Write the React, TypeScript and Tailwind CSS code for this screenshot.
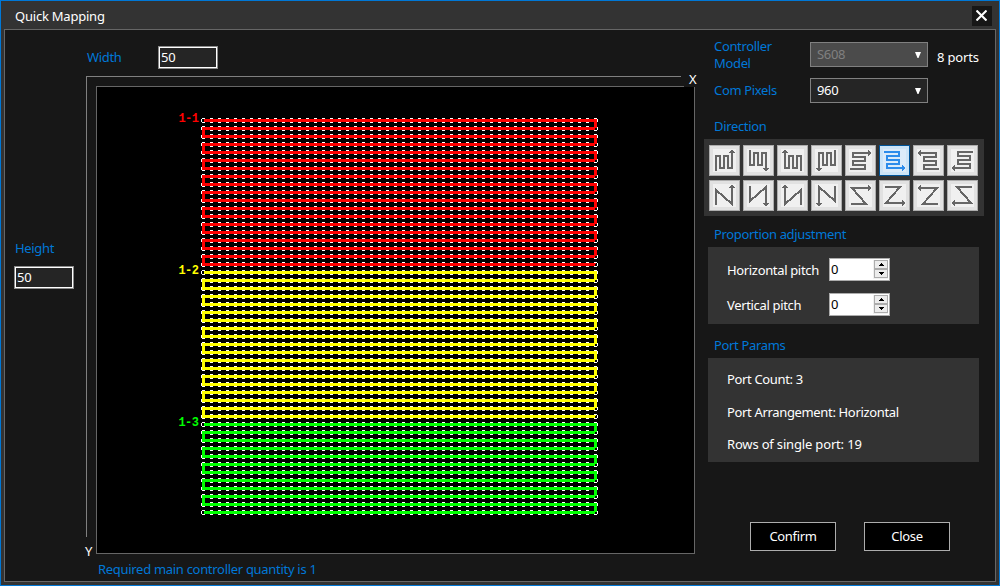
import React, { useState } from "react";
import clsx from "clsx";

const COLS = 50;
const ROWS = 50;
const PITCH = 8;
const ROWS_PER_PORT = 19;

const PORTS = [
  { label: "1-1", color: "#ff0000" },
  { label: "1-2", color: "#ffff00" },
  { label: "1-3", color: "#00ff00" },
];

// snake path for one port, always starting at the left
const buildPortPath = (start: number, count: number) => {
  const left = 2.5;
  const right = 2.5 + (COLS - 1) * PITCH;
  let d = "";
  for (let i = 0; i < count; i++) {
    const y = 2.5 + (start + i) * PITCH;
    const [from, to] = i % 2 === 0 ? [left, right] : [right, left];
    d += `${i === 0 ? "M" : "L"}${from} ${y}L${to} ${y}`;
  }
  return d;
};

const PixelMap: React.FC = () => {
  const right = (COLS - 1) * PITCH;
  return (
    <svg width="420" height="410" viewBox="-23 -10 420 410" shapeRendering="crispEdges" className="block">
      <defs>
        <pattern id="node" width={PITCH} height={PITCH} patternUnits="userSpaceOnUse">
          <path d="M1 0h3v1h-3zM1 4h3v1h-3zM0 1h1v3h-1zM4 1h1v3h-1z" fill="#fff" />
        </pattern>
      </defs>
      <rect width={right + 5} height={(ROWS - 1) * PITCH + 5} fill="url(#node)" />
      {PORTS.map((port, p) => {
        const start = p * ROWS_PER_PORT;
        const count = Math.min(ROWS_PER_PORT, ROWS - start);
        return (
          <g key={port.label}>
            <path d={buildPortPath(start, count)} fill="none" stroke={port.color} strokeWidth="3" />
            {Array.from({ length: count }, (_, i) => i)
              .filter((i) => i % 2 === 1 || i === count - 1)
              .map((i) => (
                <rect key={i} x={right + 2} y={(start + i) * PITCH + 2} width="2" height="2" fill="#000" />
              ))}
            <text
              x="-22.5"
              y={start * PITCH + 4}
              fill={port.color}
              textLength="20"
              className="font-['Liberation_Mono',monospace] text-[12px] font-bold"
            >
              {port.label}
            </text>
          </g>
        );
      })}
    </svg>
  );
};

const SHAPES = {
  columns: { d: "M7 26V11H11V23H15V11H19V23H23V7", head: "M22 5h2v1h1v1h1v1h-6v-1h1v-1h1z" },
  rows: { d: "M5 24H20V20H8V16H20V12H8V8H24", head: "M26 7v2h-1v1h-1v1h-1v-6h1v1h1v1z" },
  n: { d: "M7 25V10L23 24V7", head: "M22 5h2v1h1v1h1v1h-6v-1h1v-1h1z" },
  z: { d: "M6 24H21L7 8H24", head: "M26 7v2h-1v1h-1v1h-1v-6h1v1h1v1z" },
};

const FLIPS = [
  undefined,
  "translate(0 31) scale(1 -1)",
  "translate(31 0) scale(-1 1)",
  "translate(31 31) scale(-1 -1)",
];

const DIRECTIONS = [
  ...FLIPS.map((flip) => ({ ...SHAPES.columns, flip })),
  ...FLIPS.map((flip) => ({ ...SHAPES.rows, flip })),
  ...FLIPS.map((flip) => ({ ...SHAPES.n, flip })),
  ...FLIPS.map((flip) => ({ ...SHAPES.z, flip })),
];

const DirectionPicker: React.FC = () => {
  const [selected, setSelected] = useState(5);

  return (
    <div className="ml-[-1px] grid h-[77px] w-[280px] grid-cols-[repeat(8,31px)] grid-rows-[31px_31px] gap-x-[3px] gap-y-1 bg-[#333] pl-[5px] pt-[6px]">
      {DIRECTIONS.map((dir, i) => (
        <button
          key={i}
          onClick={() => setSelected(i)}
          className={clsx(
            "border",
            selected === i ? "border-[#005499] bg-[#cce4f7] text-[#2d8ceb]" : "border-[#adadad] bg-[#e1e1e1] text-[#666]"
          )}
        >
          <svg width="31" height="31" viewBox="0 0 31 31" shapeRendering="crispEdges" className="-m-px block">
            <rect x="4" y="4" width="23" height="23" fill={selected === i ? "#dcebf9" : "#f0f0f0"} />
            <g transform={dir.flip}>
              <path d={dir.d} fill="none" stroke="currentColor" strokeWidth="2" />
              <path d={dir.head} fill="currentColor" />
            </g>
          </svg>
        </button>
      ))}
    </div>
  );
};

const SizeInput: React.FC<{ value: string; onChange: (v: string) => void }> = ({ value, onChange }) => (
  <div className="h-[23px] w-[60px] border border-[#8a8a8a]">
    <input
      value={value}
      onChange={(e) => onChange(e.target.value)}
      className="block h-full w-full border border-white bg-[#252525] pb-[2px] pl-px text-[13px] leading-[17px] tracking-[-0.3px] text-white outline-none"
    />
  </div>
);

const Select: React.FC<{ value: string; disabled?: boolean }> = ({ value, disabled }) => (
  <button
    disabled={disabled}
    className={clsx(
      "flex h-[25px] w-[118px] items-center justify-between border border-[#808080] pl-[6px] pr-[6px]",
      disabled ? "bg-[#4b4b4b] text-[#808080]" : "bg-[#252525] text-white"
    )}
  >
    <span>{value}</span>
    <svg width="6" height="6" viewBox="0 0 6 6" className="text-white">
      <path d="M0 0h6L3.5 6h-1z" fill="currentColor" />
    </svg>
  </button>
);

const Spinner: React.FC<{ value: number; onChange: (v: number) => void }> = ({ value, onChange }) => (
  <div className="flex h-[23px] w-[61px] justify-between border border-[#acacac] bg-white pr-px pt-px text-black">
    <span className="pl-px leading-[18px]">{value}</span>
    <div className="flex h-[19px] w-[15px] flex-col bg-[#f0f0f0] pl-px">
      {[1, -1].map((step) => (
        <button
          key={step}
          onClick={() => onChange(value + step)}
          className="flex h-[9px] items-center justify-center border border-[#acacac] bg-[#ececec]"
        >
          <svg width="5" height="3" viewBox="0 0 5 3" shapeRendering="crispEdges">
            <path d={step > 0 ? "M2 0h1v1h1v1h1v1h-5v-1h1v-1h1z" : "M0 0h5v1h-1v1h-1v1h-1v-1h-1v-1h-1z"} fill="#000" />
          </svg>
        </button>
      ))}
    </div>
  </div>
);

const Label: React.FC<{ className?: string; children: React.ReactNode }> = ({ className, children }) => (
  <div className={clsx("text-[#0078d7] leading-[17px]", className)}>{children}</div>
);

const App: React.FC = () => {
  const [width, setWidth] = useState("50");
  const [height, setHeight] = useState("50");
  const [hPitch, setHPitch] = useState(0);
  const [vPitch, setVPitch] = useState(0);

  return (
    <div className="flex h-[586px] w-[1000px] flex-col overflow-hidden border border-[#0078d7] bg-[#333] pb-[3px] pl-[3px] pr-[3px] font-['Noto_Sans',sans-serif] text-[13px] tracking-[-0.34px] text-white">
      <header className="flex h-7 shrink-0 items-center justify-between pl-[11px] pr-1">
        <span className="pt-[3px] leading-[17px] tracking-[-0.22px]">Quick Mapping</span>
        <button className="mt-[1px] flex h-5 w-5 items-center justify-center bg-[#171717] pb-px pr-px">
          <svg width="11" height="11" viewBox="0 0 11 11">
            <path d="M0.5 0.5L10.5 10.5M10.5 0.5L0.5 10.5" stroke="#fff" strokeWidth="2.1" />
          </svg>
        </button>
      </header>

      <main className="flex flex-1 border border-[#666] bg-[#171717]">
        <aside className="w-[81px] shrink-0 pl-[9px] pt-[210px]">
          <Label className="mb-[9px] pl-px">Height</Label>
          <SizeInput value={height} onChange={setHeight} />
        </aside>

        <section className="w-[619px] shrink-0">
          <div className="flex h-[46px] pt-4">
            <Label className="w-[72px] pl-px pt-[3px]">Width</Label>
            <SizeInput value={width} onChange={setWidth} />
          </div>
          <div className="relative h-[478px]">
            <div className="h-[461px] w-[595px] border-l border-t border-[#808080] pl-[9px] pt-[9px]">
              <div className="h-[468px] w-[599px] border border-[#666] bg-black pl-[81px] pt-[21px]">
                <PixelMap />
              </div>
            </div>
            <span className="absolute left-[598px] top-[-5px] w-[18px] bg-[#171717] pl-[5px] leading-[16px]">X</span>
            <span className="absolute left-[-3px] top-[467px] h-[17px] w-[13px] bg-[#171717] pl-[2px] leading-[17px]">Y</span>
          </div>
          <Label className="pl-3 pt-[7px] tracking-[-0.3px]">Required main controller quantity is 1</Label>
        </section>

        <section className="flex w-[285px] flex-col">
          <div className="flex h-[48px] pl-[9px] pt-2">
            <Label className="w-[96px] pr-5">Controller Model</Label>
            <div className="pt-1">
              <Select value="S608" disabled />
            </div>
            <span className="pl-[9px] pt-[11px] leading-[17px] tracking-[-0.15px]">8 ports</span>
          </div>
          <div className="flex h-[40px] pl-[9px]">
            <Label className="w-[96px] pt-[4px]">Com Pixels</Label>
            <Select value="960" />
          </div>
          <Label className="mb-[4px] pl-[9px]">Direction</Label>
          <DirectionPicker />
          <Label className="mb-[4px] mt-[10px] pl-[9px]">Proportion adjustment</Label>
          <div className="ml-[3px] flex h-[77px] w-[271px] flex-col gap-3 bg-[#333] pl-[19px] pt-[11px]">
            <div className="flex">
              <span className="w-[102px] pt-[4px] leading-[17px]">Horizontal pitch</span>
              <Spinner value={hPitch} onChange={setHPitch} />
            </div>
            <div className="flex">
              <span className="w-[102px] pt-[4px] leading-[17px]">Vertical pitch</span>
              <Spinner value={vPitch} onChange={setVPitch} />
            </div>
          </div>
          <Label className="mb-[4px] mt-[13px] pl-[9px]">Port Params</Label>
          <div className="ml-[3px] flex h-[104px] w-[271px] flex-col gap-4 bg-[#333] pl-[19px] pt-[13px] leading-[17px]">
            <span>Port Count: 3</span>
            <span>Port Arrangement: Horizontal</span>
            <span className="-mt-px tracking-[-0.17px]">Rows of single port: 19</span>
          </div>
          <div className="mt-[60px] flex gap-7 pl-[45px]">
            <button className="h-[29px] w-[86px] border border-[#adadad] bg-black">Confirm</button>
            <button className="h-[29px] w-[86px] border border-[#adadad] bg-black">Close</button>
          </div>
        </section>
      </main>
    </div>
  );
};

export default App;
